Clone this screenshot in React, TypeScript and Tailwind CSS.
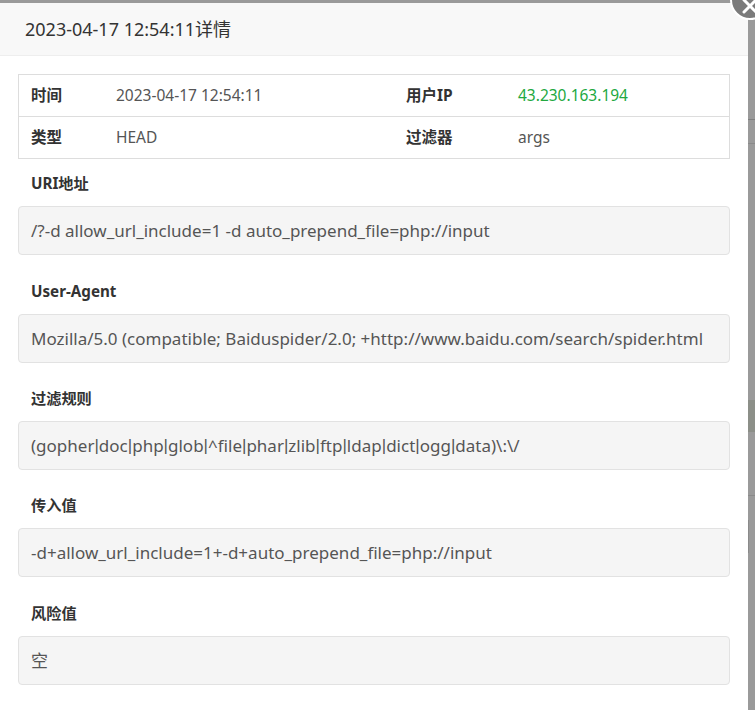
import React from "react";

const font = '"Noto Sans", "Noto Sans CJK SC", sans-serif';

function Pipes({ text }: { text: string }) {
  const parts = text.split("|");
  return (
    <>
      {parts.map((p, i) => (
        <React.Fragment key={i}>
          {i > 0 && <span style={{ fontFamily: '"Liberation Sans", sans-serif' }}>|</span>}
          {p}
        </React.Fragment>
      ))}
    </>
  );
}

function Section({ label, value, mt }: { label: string; value: React.ReactNode; mt: string }) {
  return (
    <div className={mt}>
      <div className="h-[28px] leading-[28px] pl-[13px] text-[15.2px] font-bold text-[#333]">{label}</div>
      <div className="mt-[9px] h-[49px] rounded-[4px] border border-[#e2e2e2] bg-[#f5f5f5] pl-[12px] flex items-center text-[17px] text-[#555] whitespace-nowrap overflow-hidden">
        {value}
      </div>
    </div>
  );
}

export default function App() {
  return (
    <div className="relative flex w-[755px] h-[710px] bg-[#9a9a9a] overflow-hidden" style={{ fontFamily: font }}>
      <div className="w-[748px] mt-[3px] bg-white flex flex-col">
        <div className="h-[53px] border-b border-[#eeeeee] bg-[#f8f8f8] pl-[25px] flex items-center text-[18px] text-[#333]">
          2023-04-17 12:54:11详情
        </div>
        <div className="px-[18px] pt-[18px]">
          <div className="border border-[#dddddd] text-[15.5px]">
            <div className="flex h-[42px] items-center border-b border-[#dddddd]">
              <div className="w-[85px] pl-[12px] font-bold text-[#333]">时间</div>
              <div className="w-[290px] pl-[12px] text-[#555]">2023-04-17 12:54:11</div>
              <div className="w-[112px] pl-[12px] font-bold text-[#333]">用户IP</div>
              <div className="pl-[12px] text-[#22a83f]">43.230.163.194</div>
            </div>
            <div className="flex h-[41px] items-center">
              <div className="w-[85px] pl-[12px] font-bold text-[#333]">类型</div>
              <div className="w-[290px] pl-[12px] text-[#555]">HEAD</div>
              <div className="w-[112px] pl-[12px] font-bold text-[#333]">过滤器</div>
              <div className="pl-[12px] text-[#555]">args</div>
            </div>
          </div>
          <Section mt="mt-[10px]" label="URI地址" value="/?-d allow_url_include=1 -d auto_prepend_file=php://input" />
          <Section mt="mt-[22px]" label="User-Agent" value="Mozilla/5.0 (compatible; Baiduspider/2.0; +http://www.baidu.com/search/spider.html" />
          <Section
            mt="mt-[21px]"
            label="过滤规则"
            value={<Pipes text="(gopher|doc|php|glob|^file|phar|zlib|ftp|ldap|dict|ogg|data)\:\/" />}
          />
          <Section mt="mt-[21px]" label="传入值" value="-d+allow_url_include=1+-d+auto_prepend_file=php://input" />
          <Section mt="mt-[22px]" label="风险值" value="空" />
        </div>
      </div>
      <div className="flex-1 flex flex-col">
        <div className="h-[119px]" />
        <div className="h-px bg-[#7f7f7f]" />
        <div className="h-[23px]" />
        <div className="h-px bg-[#8a8a8a]" />
        <div className="h-[256px]" />
        <div className="h-[32px] bg-[#8c8f88]" />
        <div className="h-[63px]" />
        <div className="h-px bg-[#8a8a8a]" />
        <div className="h-[24px]" />
        <div className="h-[33px] border-l border-[#8a8a8a]" />
      </div>
      <div className="absolute left-[730px] top-[-20px] w-[40px] h-[40px] rounded-full bg-[#7b7b7b] border-2 border-white">
        <svg width="40" height="40" viewBox="0 0 40 40" className="absolute left-[-2px] top-[-2px]">
          <path d="M14 20 L26 32 M26 20 L14 32" stroke="white" strokeWidth="3" strokeLinecap="round" />
        </svg>
      </div>
    </div>
  );
}
